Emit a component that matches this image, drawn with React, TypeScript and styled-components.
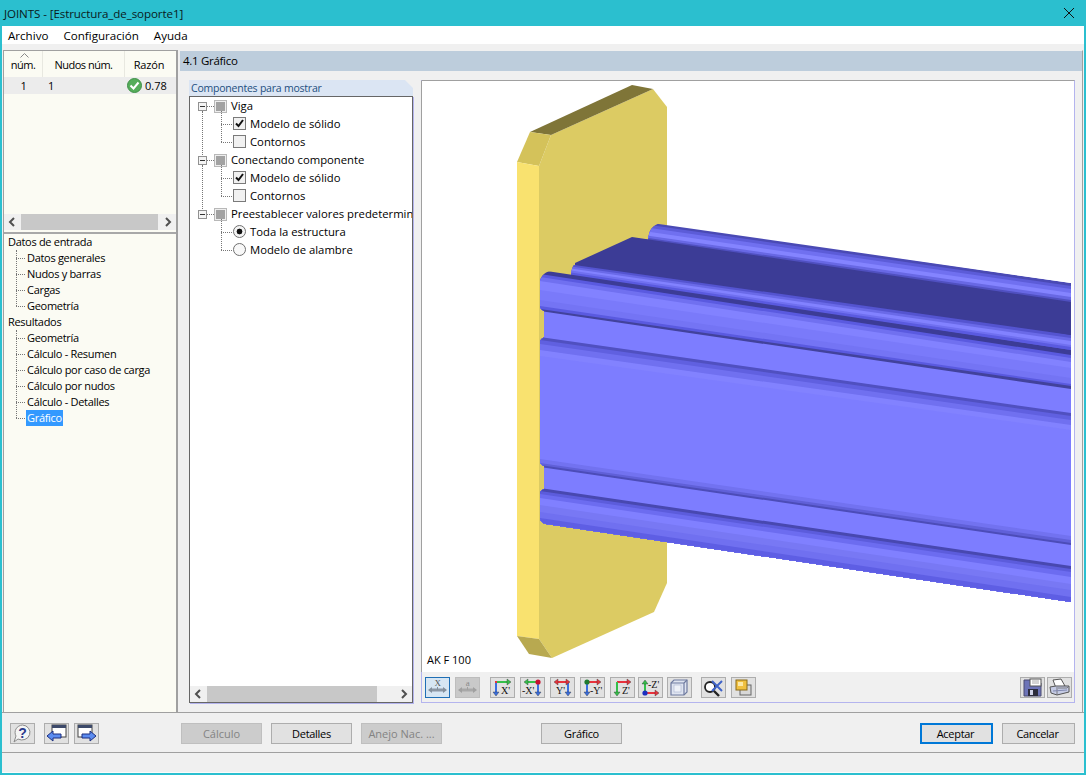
import React from "react";
import styled, { createGlobalStyle, css } from "styled-components";

const GlobalStyle = createGlobalStyle`
  html, body { margin: 0; padding: 0; background: #fff; }
  body { font-family: "Open Sans", "Noto Sans", "Liberation Sans", sans-serif; font-size: 11px; letter-spacing: -0.3px; color: #000; }
  * { box-sizing: border-box; }
`;

// --- beam drawing data: y at x=540 (l) and x=1071 (r) for each colour step ---
type Stop = { l: number; r: number; c: string };

const BACK_FLANGE: Stop[] = [
  { l: 207, r: 283, c: "#4a4ab4" },
  { l: 209, r: 286, c: "#5c5cd8" },
  { l: 212, r: 289, c: "#7070f0" },
  { l: 216, r: 293, c: "#8484ff" },
  { l: 220, r: 297, c: "#6868e4" },
  { l: 222, r: 300, c: "#5050c0" },
];

const UPPER_LIP: Stop[] = [
  { l: 260, r: 335, c: "#5454d0" },
  { l: 262, r: 338, c: "#6a6ae8" },
  { l: 264, r: 341, c: "#8282ff" },
  { l: 266, r: 345, c: "#7070f0" },
  { l: 268, r: 347, c: "#5a5ae0" },
];

const FRONT: Stop[] = [
  { l: 270, r: 350, c: "#3c3c96" },
  { l: 274, r: 355, c: "#5a5ae0" },
  { l: 277, r: 358, c: "#7070f0" },
  { l: 281, r: 362, c: "#8282ff" },
  { l: 290, r: 368, c: "#7a7afa" },
  { l: 300, r: 378, c: "#7474f4" },
  { l: 306, r: 384, c: "#5a5ae0" },
  { l: 309, r: 386, c: "#42429c" },
  { l: 311, r: 389, c: "#7d7dff" },
  { l: 337, r: 413, c: "#5050c0" },
  { l: 340, r: 416, c: "#6060e0" },
  { l: 344, r: 420, c: "#7070f0" },
  { l: 350, r: 425, c: "#8282ff" },
  { l: 356, r: 430, c: "#7d7dff" },
  { l: 459, r: 536, c: "#7272f0" },
  { l: 463, r: 540, c: "#6060d8" },
  { l: 465, r: 543, c: "#4c4cb8" },
  { l: 467, r: 545, c: "#7d7dff" },
  { l: 488, r: 566, c: "#4848b0" },
  { l: 491, r: 569, c: "#5c5cdc" },
  { l: 494, r: 572, c: "#6c6cf0" },
  { l: 498, r: 577, c: "#8080ff" },
  { l: 505, r: 584, c: "#7878f4" },
  { l: 512, r: 590, c: "#7070f0" },
  { l: 518, r: 597, c: "#5e5ee4" },
];

const Bands = ({ stops, clip }: { stops: Stop[]; clip: string }) => (
  <g clipPath={`url(#${clip})`}>
    {stops.map((s) => (
      <polygon key={s.l} points={`540,${s.l} 1071,${s.r} 1071,640 540,640`} fill={s.c} />
    ))}
  </g>
);

const JointDrawing = () => (
  <Drawing viewBox="422 81 649 591" width={649} height={591}>
    <defs>
      <clipPath id="backClip">
        <path d="M648 240 Q649 230 653 227 Q657 223 663 223 L1071 283 L1071 303 L632 238 Z" />
      </clipPath>
      <clipPath id="lipClip">
        <path d="M571 276 Q571 267 576 262 L650 262 L1071 335 L1071 352 Z" />
      </clipPath>
      <clipPath id="frontClip">
        <path d="M539 288 Q539 278 544 274 Q549 270 557 271 L1071 350 L1071 602 L546 524 Q539 522 539 514 L539 498 Q539 491 544 489 L544 466 Q539 464 539 458 L539 345 Q539 340 544 337 L544 311 Q539 309 539 302 Z" />
      </clipPath>
    </defs>
    <polygon points="551,135 653,89 667,107 667,583 654,612 552,658 539,639 539,166" fill="#dccb63" />
    <polygon points="530,132 632,85 653,89 551,135" fill="#7f7538" />
    <polygon points="530,132 551,135 539,166 517,162" fill="#d4c25a" />
    <polygon points="517,162 539,166 539,639 517,636" fill="#f9e26f" />
    <polygon points="517,636 539,639 552,658 529,654" fill="#b8a950" />
    <Bands stops={BACK_FLANGE} clip="backClip" />
    <polygon points="575,263 632,237 1071,302 1071,338 575,270" fill="#3c3c96" />
    <Bands stops={UPPER_LIP} clip="lipClip" />
    <Bands stops={FRONT} clip="frontClip" />
  </Drawing>
);

// --- icons ---
const arrowHead = (x: number, y: number, dir: "l" | "r" | "u" | "d", c: string) => {
  const p = {
    l: `${x},${y} ${x + 4},${y - 3} ${x + 4},${y + 3}`,
    r: `${x},${y} ${x - 4},${y - 3} ${x - 4},${y + 3}`,
    u: `${x},${y} ${x - 3},${y + 4} ${x + 3},${y + 4}`,
    d: `${x},${y} ${x - 3},${y - 4} ${x + 3},${y - 4}`,
  }[dir];
  return <polygon points={p} fill={c} stroke="#333" strokeWidth={0.4} />;
};

const AxisLabel = ({ x, y, children }: { x: number; y: number; children: string }) => (
  <text x={x} y={y} fontFamily="Liberation Serif, serif" fontSize={10} letterSpacing={0} fill="#111">
    {children}
  </text>
);

const RED = "#e8323c";
const GREEN = "#35c04a";
const BLUE = "#3a6fe0";

const IconXPos = () => (
  <svg width={23} height={19} viewBox="0 0 23 19">
    <path d="M5 4H17" stroke={GREEN} strokeWidth={2} />
    <path d="M5 3V5" stroke={RED} strokeWidth={2} />
    <path d="M5 5V14" stroke={BLUE} strokeWidth={2} />
    {arrowHead(20, 4, "r", GREEN)}
    {arrowHead(5, 18, "d", BLUE)}
    <AxisLabel x={10} y={16}>X'</AxisLabel>
  </svg>
);

const IconXNeg = () => (
  <svg width={23} height={19} viewBox="0 0 23 19">
    <path d="M7 4H17" stroke={GREEN} strokeWidth={2} />
    <path d="M17 5V14" stroke={BLUE} strokeWidth={2} />
    {arrowHead(3, 4, "l", GREEN)}
    {arrowHead(17, 18, "d", BLUE)}
    <circle cx={17} cy={4} r={2.6} fill="#c8102e" />
    <AxisLabel x={1} y={16}>-X'</AxisLabel>
  </svg>
);

const IconYPos = () => (
  <svg width={23} height={19} viewBox="0 0 23 19">
    <path d="M7 4H15" stroke={RED} strokeWidth={2} />
    <path d="M17 5V14" stroke={BLUE} strokeWidth={2} />
    {arrowHead(3, 4, "l", RED)}
    {arrowHead(19, 4, "r", RED)}
    {arrowHead(17, 18, "d", BLUE)}
    <AxisLabel x={5} y={16}>Y'</AxisLabel>
  </svg>
);

const IconYNeg = () => (
  <svg width={23} height={19} viewBox="0 0 23 19">
    <path d="M6 4H16" stroke={RED} strokeWidth={2} />
    <path d="M6 5V14" stroke={BLUE} strokeWidth={2} />
    {arrowHead(20, 4, "r", RED)}
    {arrowHead(6, 18, "d", BLUE)}
    <circle cx={6} cy={4} r={2.6} fill="#1f7a2e" />
    <AxisLabel x={9} y={16}>-Y'</AxisLabel>
  </svg>
);

const IconZPos = () => (
  <svg width={23} height={19} viewBox="0 0 23 19">
    <path d="M6 4H16" stroke={RED} strokeWidth={2} />
    <path d="M6 4V14" stroke={GREEN} strokeWidth={2} />
    {arrowHead(20, 4, "r", RED)}
    {arrowHead(6, 18, "d", GREEN)}
    <AxisLabel x={11} y={16}>Z'</AxisLabel>
  </svg>
);

const IconZNeg = () => (
  <svg width={23} height={19} viewBox="0 0 23 19">
    <path d="M6 6V14" stroke={GREEN} strokeWidth={2} />
    <path d="M6 15H16" stroke={RED} strokeWidth={2} />
    {arrowHead(6, 2, "u", GREEN)}
    {arrowHead(20, 15, "r", RED)}
    <circle cx={6} cy={15} r={2.6} fill="#1c2fc0" />
    <AxisLabel x={9} y={10}>-Z'</AxisLabel>
  </svg>
);

const IconCube = () => (
  <svg width={23} height={19} viewBox="0 0 23 19">
    <path d="M6 2H19V14L16 17H3V5Z" fill="#dfe4f0" stroke="#6f7ba0" strokeWidth={1.2} />
    <path d="M3 5H16V17M16 5L19 2" fill="none" stroke="#6f7ba0" strokeWidth={1.2} />
    <rect x={6} y={7} width={7} height={7} fill="#eef1f8" stroke="#a9b3cf" strokeWidth={0.6} />
  </svg>
);

const IconZoomOff = () => (
  <svg width={23} height={19} viewBox="0 0 23 19">
    <circle cx={8} cy={9} r={5} fill="#fff" stroke="#222" strokeWidth={1.8} />
    <path d="M12 13L17 18" stroke="#222" strokeWidth={2.4} />
    <path d="M10 3L20 13M20 3L10 13" stroke="#3f63c8" strokeWidth={2} />
  </svg>
);

const IconLayers = () => (
  <svg width={23} height={19} viewBox="0 0 23 19">
    <rect x={8} y={7} width={11} height={10} fill="#d8d8d8" stroke="#666" />
    <rect x={4} y={2} width={11} height={10} fill="#f0c040" stroke="#8a6a18" />
    <rect x={6} y={4} width={5} height={4} fill="#fbe8a8" />
  </svg>
);

const IconDimension = ({ label, faded }: { label: string; faded?: boolean }) => (
  <svg width={23} height={19} viewBox="0 0 23 19">
    <text x={11.5} y={8} textAnchor="middle" fontFamily="Liberation Serif, serif" fontSize={9} fill={faded ? "#8a8a8a" : "#555"}>
      {label}
    </text>
    <path d="M5 12H18" stroke={faded ? "#a8a8a8" : "#8c97a4"} strokeWidth={3} />
    <path d="M2 12L6 9V15ZM21 12L17 9V15Z" fill={faded ? "#a0a0a0" : "#84909c"} />
    <path d="M11.5 9V12" stroke={faded ? "#a0a0a0" : "#84909c"} />
  </svg>
);

const IconSave = () => (
  <svg width={23} height={19} viewBox="0 0 23 19">
    <path d="M3 2H17L20 5V18H3Z" fill="#6d74b8" stroke="#4a4a70" />
    <rect x={9} y={1} width={11} height={7} fill="#fff" stroke="#555" />
    <path d="M11 3H18M11 5H18" stroke="#aaa" />
    <rect x={7} y={11} width={10} height={7} fill="#2c2c3c" />
    <rect x={9} y={12} width={3} height={5} fill="#cfd2e8" />
  </svg>
);

const IconPrint = () => (
  <svg width={23} height={19} viewBox="0 0 23 19">
    <path d="M5 2L13 1L17 8L8 10Z" fill="#fff" stroke="#555" />
    <path d="M2 9L8 8L21 8V14L9 17L3 15Z" fill="#c5cbe4" stroke="#555" />
    <path d="M8 10L19 10L21 8M9 17V11" fill="none" stroke="#666" strokeWidth={0.8} />
    <path d="M5 13L19 12" stroke="#8088b0" />
  </svg>
);

const IconHelp = () => (
  <svg width={23} height={19} viewBox="0 0 23 19">
    <path d="M11.5 1A8 7.5 0 1 1 7 15L3 18L5 12A8 7.5 0 0 1 11.5 1Z" fill="#f4f4f4" stroke="#8b8b8b" />
    <text x={11.5} y={14} textAnchor="middle" fontFamily="Liberation Sans, sans-serif" fontWeight={700} fontSize={14} fill="#2a3a8c">
      ?
    </text>
  </svg>
);

const IconNav = ({ dir }: { dir: "l" | "r" }) => (
  <svg width={23} height={19} viewBox="0 0 23 19">
    <rect x={dir === "l" ? 7 : 3} y={1} width={14} height={12} fill="#fff" stroke="#444" />
    <rect x={dir === "l" ? 7 : 3} y={1} width={14} height={3} fill="#3d4a6a" />
    {dir === "l" ? (
      <path d="M2 12L8 7V10H16V14H8V17Z" fill="#5c8cf0" stroke="#1c2f80" />
    ) : (
      <path d="M21 12L15 7V10H7V14H15V17Z" fill="#5c8cf0" stroke="#1c2f80" />
    )}
  </svg>
);

const ScrollBar = ({ thumbLeft, thumbWidth }: { thumbLeft: number; thumbWidth: number }) => (
  <ScrollTrack>
    <ScrollArrow viewBox="0 0 8 10" width={8} height={10} $side="left">
      <path d="M6 1L2 5L6 9" fill="none" stroke="#505050" strokeWidth={2} />
    </ScrollArrow>
    <ScrollThumb style={{ marginLeft: thumbLeft, width: thumbWidth }} />
    <ScrollArrow viewBox="0 0 8 10" width={8} height={10} $side="right">
      <path d="M2 1L6 5L2 9" fill="none" stroke="#505050" strokeWidth={2} />
    </ScrollArrow>
  </ScrollTrack>
);

const NAV_TREE = [
  { title: "Datos de entrada", items: ["Datos generales", "Nudos y barras", "Cargas", "Geometría"] },
  {
    title: "Resultados",
    items: ["Geometría", "Cálculo - Resumen", "Cálculo por caso de carga", "Cálculo por nudos", "Cálculo - Detalles", "Gráfico"],
  },
];

const OPTION_TREE = [
  {
    title: "Viga",
    kind: "check",
    items: [
      { label: "Modelo de sólido", on: true },
      { label: "Contornos", on: false },
    ],
  },
  {
    title: "Conectando componente",
    kind: "check",
    items: [
      { label: "Modelo de sólido", on: true },
      { label: "Contornos", on: false },
    ],
  },
  {
    title: "Preestablecer valores predeterminados",
    kind: "radio",
    items: [
      { label: "Toda la estructura", on: true },
      { label: "Modelo de alambre", on: false },
    ],
  },
];

const VIEW_TOOLS = [
  { key: "x", el: <IconXPos /> },
  { key: "-x", el: <IconXNeg /> },
  { key: "y", el: <IconYPos /> },
  { key: "-y", el: <IconYNeg /> },
  { key: "z", el: <IconZPos /> },
];

export default function App() {
  return (
    <>
      <GlobalStyle />
      <Window>
        <TitleBar>
          <TitleText>JOINTS - [Estructura_de_soporte1]</TitleText>
          <svg width={12} height={12} viewBox="0 0 12 12">
            <path d="M1 1L11 11M11 1L1 11" stroke="#111" strokeWidth={1} />
          </svg>
        </TitleBar>
        <MenuBar>
          <MenuItem>Archivo</MenuItem>
          <MenuItem>Configuración</MenuItem>
          <MenuItem>Ayuda</MenuItem>
        </MenuBar>

        <Body>
          <Sidebar>
            <CaseTable>
              <HeaderRow>
                <NumHeader>
                  <SortCaret viewBox="0 0 9 5" width={9} height={5}>
                    <path d="M0.5 4.5L4.5 0.5L8.5 4.5" fill="none" stroke="#888" />
                  </SortCaret>
                  núm.
                </NumHeader>
                <NodesHeader>Nudos núm.</NodesHeader>
                <RatioHeader>Razón</RatioHeader>
              </HeaderRow>
              <DataRow>
                <NumCell>1</NumCell>
                <NodesCell>1</NodesCell>
                <RatioCell>
                  <svg width={15} height={15} viewBox="0 0 15 15">
                    <circle cx={7.5} cy={7.5} r={7} fill="#55ad5a" stroke="#3f8f48" />
                    <path d="M3.5 7.5L6.5 10.5L11.5 4.5" fill="none" stroke="#fff" strokeWidth={2} />
                  </svg>
                  0.78
                </RatioCell>
              </DataRow>
            </CaseTable>
            <ScrollBar thumbLeft={0} thumbWidth={137} />
            <NavTree>
              {NAV_TREE.map((group) => (
                <div key={group.title}>
                  <NavParent>{group.title}</NavParent>
                  <NavChildren>
                    {group.items.map((item) => (
                      <NavChild key={item}>
                        <NavLabel $selected={item === "Gráfico"}>{item}</NavLabel>
                      </NavChild>
                    ))}
                  </NavChildren>
                </div>
              ))}
            </NavTree>
          </Sidebar>

          <Section>
            <SectionHeader>4.1 Gráfico</SectionHeader>
            <SectionContent>
              <OptionsColumn>
                <OptionsTab>Componentes para mostrar</OptionsTab>
                <OptionsBox>
                  <OptionsTree>
                    {OPTION_TREE.map((group, i) => (
                      <OptionGroup key={group.title} $last={i === OPTION_TREE.length - 1}>
                        <OptionRow>
                          <ExpandBox />
                          <Connector />
                          <TriCheck />
                          <OptionTitle>{group.title}</OptionTitle>
                        </OptionRow>
                        <OptionChildren>
                          {group.items.map((item) => (
                            <OptionChild key={item.label}>
                              {group.kind === "check" ? (
                                <CheckBox>
                                  {item.on && (
                                    <svg width={11} height={11} viewBox="0 0 11 11">
                                      <path d="M2 5.5L4.5 8L9 2" fill="none" stroke="#111" strokeWidth={2} />
                                    </svg>
                                  )}
                                </CheckBox>
                              ) : (
                                <RadioBox $on={item.on} />
                              )}
                              {item.label}
                            </OptionChild>
                          ))}
                        </OptionChildren>
                      </OptionGroup>
                    ))}
                  </OptionsTree>
                  <ScrollBar thumbLeft={0} thumbWidth={170} />
                </OptionsBox>
              </OptionsColumn>

              <GraphicColumn>
                <Viewport>
                  <JointDrawing />
                  <ViewportLabel>AK F 100</ViewportLabel>
                </Viewport>
                <Toolbar>
                  <ToolGroup>
                    <ToolButton $active>
                      <IconDimension label="X" />
                    </ToolButton>
                    <ToolButton $disabled>
                      <IconDimension label="a" faded />
                    </ToolButton>
                  </ToolGroup>
                  <AxisGroup>
                    {VIEW_TOOLS.map((tool) => (
                      <ToolButton key={tool.key}>{tool.el}</ToolButton>
                    ))}
                    <ToolButton $pull={2}>
                      <IconZNeg />
                    </ToolButton>
                    <ToolButton $pull={1}>
                      <IconCube />
                    </ToolButton>
                  </AxisGroup>
                  <ToolGroup>
                    <ToolButton>
                      <IconZoomOff />
                    </ToolButton>
                    <ToolButton>
                      <IconLayers />
                    </ToolButton>
                  </ToolGroup>
                  <ExportGroup>
                    <ToolButton>
                      <IconSave />
                    </ToolButton>
                    <ToolButton>
                      <IconPrint />
                    </ToolButton>
                  </ExportGroup>
                </Toolbar>
              </GraphicColumn>
            </SectionContent>
          </Section>
        </Body>

        <ActionBar>
          <HelpGroup>
            <ToolButton>
              <IconHelp />
            </ToolButton>
            <NavButtons>
              <ToolButton>
                <IconNav dir="l" />
              </ToolButton>
              <ToolButton>
                <IconNav dir="r" />
              </ToolButton>
            </NavButtons>
          </HelpGroup>
          <MainButtons>
            <ActionButton $disabled>Cálculo</ActionButton>
            <ActionButton>Detalles</ActionButton>
            <ActionButton $disabled>Anejo Nac. ...</ActionButton>
          </MainButtons>
          <GraphicButton>Gráfico</GraphicButton>
          <DialogButtons>
            <DialogButton $primary>Aceptar</DialogButton>
            <DialogButton>Cancelar</DialogButton>
          </DialogButtons>
        </ActionBar>
        <StatusBar />
      </Window>
    </>
  );
}

const Window = styled.div`
  width: 1086px;
  height: 775px;
  display: flex;
  flex-direction: column;
  overflow: hidden;
  background: #f0f0f0;
  border: 2px solid #2bbfcf;
  border-top: none;
`;

const TitleBar = styled.div`
  height: 26px;
  margin: 0 -2px;
  padding: 0 11px 0 4px;
  flex: none;
  display: flex;
  align-items: center;
  justify-content: space-between;
  background: #2bbfcf;
`;

const TitleText = styled.span`
  font-size: 11.6px;
  letter-spacing: -0.1px;
  color: #0a1a1c;
`;

const MenuBar = styled.div`
  height: 18px;
  flex: none;
  display: flex;
  align-items: center;
  gap: 15px;
  padding-left: 6px;
  background: #fff;
`;

const MenuItem = styled.span`
  font-size: 11.6px;
  letter-spacing: 0;
`;

const Body = styled.div`
  height: 669px;
  flex: none;
  display: flex;
  gap: 2px;
  padding: 6px 0 0 1px;
  border-bottom: 1px solid #a0a0a0;
`;

const Sidebar = styled.div`
  width: 175px;
  flex: none;
  display: flex;
  flex-direction: column;
  background: #fbfbf3;
  border: 1px solid #a0a0a0;
  border-bottom: none;
  border-right-width: 2px;
`;

const CaseTable = styled.div`
  height: 163px;
  flex: none;
`;

const HeaderRow = styled.div`
  height: 26px;
  display: grid;
  grid-template-columns: 39px 82px 1fr;
`;

const headerCell = css`
  position: relative;
  display: flex;
  align-items: flex-end;
  justify-content: center;
  padding-bottom: 5px;
  letter-spacing: -0.5px;
  border-right: 1px solid #e8e8e0;
`;

const NumHeader = styled.div`
  ${headerCell}
`;

const NodesHeader = styled.div`
  ${headerCell}
`;

const RatioHeader = styled.div`
  ${headerCell}
  letter-spacing: -0.2px;
  padding-right: 3px;
  border-right: none;
`;

const SortCaret = styled.svg`
  position: absolute;
  top: 2px;
  left: 16px;
`;

const DataRow = styled.div`
  height: 17px;
  padding-bottom: 1px;
  display: grid;
  grid-template-columns: 39px 82px 1fr;
  align-items: center;
  background: #ececec;
`;

const NumCell = styled.div`
  text-align: center;
`;

const NodesCell = styled.div`
  padding-left: 5px;
`;

const RatioCell = styled.div`
  display: flex;
  align-items: center;
  gap: 3px;
  padding-left: 2px;
  letter-spacing: 0;
`;

const ScrollTrack = styled.div`
  position: relative;
  height: 16px;
  flex: none;
  padding-left: 17px;
  padding-right: 17px;
  background: #f0f0f0;
`;

const ScrollThumb = styled.div`
  height: 100%;
  background: #c8c8c8;
`;

const ScrollArrow = styled.svg<{ $side: "left" | "right" }>`
  position: absolute;
  top: 3px;
  ${({ $side }) => ($side === "left" ? "left: 4px;" : "right: 4px;")}
`;

const NavTree = styled.div`
  flex: 1;
  margin-top: 2px;
  border-top: 2px solid #a8a8a8;
`;

const NavParent = styled.div`
  height: 16px;
  line-height: 15px;
  padding-left: 4px;
  white-space: nowrap;
`;

const NavChildren = styled.div`
  position: relative;
  padding-left: 22px;

  &::before {
    content: "";
    position: absolute;
    left: 12px;
    top: 0;
    bottom: 8px;
    border-left: 1px dotted #777;
  }
`;

const NavChild = styled.div`
  position: relative;
  height: 16px;
  line-height: 15px;
  white-space: nowrap;

  &::before {
    content: "";
    position: absolute;
    left: -10px;
    width: 9px;
    top: 8px;
    border-top: 1px dotted #777;
  }
`;

const NavLabel = styled.span<{ $selected?: boolean }>`
  display: inline-block;
  padding: 0 1px;
  ${({ $selected }) => $selected && "background: #3399ff; color: #fff; height: 16px;"}
`;

const Section = styled.div`
  flex: 1;
  min-width: 0;
  margin-right: 1px;
  display: flex;
  flex-direction: column;
  border-right: 1px solid #a0a0a0;
  border-top: 1px solid #f0f0f0;
`;

const SectionHeader = styled.div`
  height: 20px;
  line-height: 20px;
  padding-left: 3px;
  flex: none;
  font-size: 11.5px;
  background: #bdcddc;
`;

const SectionContent = styled.div`
  flex: 1;
  min-height: 0;
  display: flex;
  gap: 8px;
  padding: 9px 7px 9px 9px;
`;

const OptionsColumn = styled.div`
  width: 224px;
  flex: none;
  display: flex;
  flex-direction: column;
`;

const OptionsTab = styled.div`
  height: 16px;
  line-height: 16px;
  padding-left: 2px;
  flex: none;
  font-size: 10.5px;
  letter-spacing: -0.22px;
  color: #1d4f80;
  background: #dbe5f3;
  clip-path: polygon(0 0, calc(100% - 8px) 0, 100% 8px, 100% 100%, 0 100%);
`;

const OptionsBox = styled.div`
  flex: 1;
  min-height: 0;
  display: flex;
  flex-direction: column;
  background: #fff;
  border: 1px solid #666;
  box-shadow: 1px 1px 0 #b4b4ee;
`;

const OptionsTree = styled.div`
  flex: 1;
  min-height: 0;
  overflow: hidden;
  font-size: 11.3px;
  letter-spacing: 0;
`;

const OptionGroup = styled.div<{ $last: boolean }>`
  position: relative;

  ${({ $last }) =>
    !$last &&
    css`
      &::before {
        content: "";
        position: absolute;
        left: 12px;
        top: 14px;
        bottom: -4px;
        border-left: 1px dotted #777;
      }
    `}
`;

const OptionRow = styled.div`
  height: 18px;
  display: flex;
  align-items: center;
  padding-left: 8px;
  white-space: nowrap;
`;

const ExpandBox = styled.span`
  position: relative;
  width: 9px;
  height: 9px;
  flex: none;
  background: #f4f4f4;
  border: 1px solid #919191;

  &::after {
    content: "";
    position: absolute;
    left: 1px;
    right: 1px;
    top: 3px;
    border-top: 1px solid #333;
  }
`;

const Connector = styled.span`
  width: 7px;
  flex: none;
  border-top: 1px dotted #777;
`;

const TriCheck = styled.span`
  width: 13px;
  height: 13px;
  flex: none;
  margin-right: 4px;
  background: #a2a2a2;
  border: 1px solid #b8b8b8;
  box-shadow: inset 0 0 0 1px #eee;
`;

const OptionTitle = styled.span`
  line-height: 18px;
`;

const OptionChildren = styled.div`
  position: relative;
  padding-left: 43px;

  &::before {
    content: "";
    position: absolute;
    left: 31px;
    top: -4px;
    bottom: 9px;
    border-left: 1px dotted #777;
  }
`;

const OptionChild = styled.div`
  position: relative;
  height: 18px;
  display: flex;
  align-items: center;
  gap: 4px;
  line-height: 16px;
  padding-bottom: 1px;
  white-space: nowrap;

  &::before {
    content: "";
    position: absolute;
    left: -12px;
    width: 11px;
    top: 9px;
    border-top: 1px dotted #777;
  }
`;

const CheckBox = styled.span`
  width: 13px;
  height: 13px;
  flex: none;
  display: flex;
  align-items: center;
  justify-content: center;
  background: #f1f1f1;
  border: 1px solid #7a7a7a;
`;

const RadioBox = styled.span<{ $on: boolean }>`
  width: 13px;
  height: 13px;
  flex: none;
  border-radius: 50%;
  border: 1px solid #6f6f6f;
  background: ${({ $on }) => ($on ? "radial-gradient(circle, #111 0 2.6px, #f4f4f4 3.2px)" : "#f8f8f8")};
`;

const GraphicColumn = styled.div`
  flex: 1;
  min-width: 0;
  display: flex;
  flex-direction: column;
  border-top: 1px solid #a0a0a0;
  border-left: 1px solid #b4b4ee;
  border-right: 1px solid #b4b4ee;
  border-bottom: 1px solid #b4b4ee;
`;

const Viewport = styled.div`
  position: relative;
  flex: 1;
  min-height: 0;
  margin-left: -1px;
  background: #fff;
  border-left: 1px solid #a0a0a0;
`;

const Drawing = styled.svg`
  display: block;
`;

const ViewportLabel = styled.span`
  position: absolute;
  left: 5px;
  bottom: 5px;
  letter-spacing: 0;
`;

const Toolbar = styled.div`
  height: 30px;
  flex: none;
  display: flex;
  align-items: center;
  padding: 0 2px 0 3px;
  background: #f0f0f0;
`;

const ToolGroup = styled.div`
  display: flex;
  gap: 5px;
  margin-right: 10px;
`;

const AxisGroup = styled.div`
  display: flex;
  gap: 5px;
  margin-right: 9px;
`;

const ExportGroup = styled.div`
  display: flex;
  gap: 2px;
  margin-left: auto;
`;

const ToolButton = styled.div<{ $active?: boolean; $disabled?: boolean; $pull?: number }>`
  width: 25px;
  height: 21px;
  flex: none;
  display: flex;
  align-items: center;
  justify-content: center;
  margin-left: ${({ $pull }) => ($pull ? -$pull : 0)}px;
  background: ${({ $active, $disabled }) => ($active ? "#d7e6f3" : $disabled ? "#c9c9c9" : "#e1e1e1")};
  border: 1px solid ${({ $active, $disabled }) => ($active ? "#1f6fb5" : $disabled ? "#bdbdbd" : "#adadad")};
`;

const ActionBar = styled.div`
  height: 40px;
  flex: none;
  display: flex;
  align-items: center;
  padding: 2px 0 0 8px;
  border-bottom: 1px solid #a0a0a0;
`;

const HelpGroup = styled.div`
  display: flex;
  gap: 9px;
  width: 171px;
  flex: none;
`;

const NavButtons = styled.div`
  display: flex;
  gap: 5px;
`;

const MainButtons = styled.div`
  display: flex;
  gap: 9px;
  margin-right: 99px;
`;

const ActionButton = styled.div<{ $disabled?: boolean }>`
  width: 81px;
  height: 21px;
  display: flex;
  align-items: center;
  justify-content: center;
  white-space: nowrap;
  letter-spacing: ${({ $disabled }) => ($disabled ? "0" : "-0.3px")};
  color: ${({ $disabled }) => ($disabled ? "#838383" : "#000")};
  background: ${({ $disabled }) => ($disabled ? "#cccccc" : "#e1e1e1")};
  border: 1px solid ${({ $disabled }) => ($disabled ? "#bfbfbf" : "#adadad")};
`;

const GraphicButton = styled(ActionButton)``;

const DialogButtons = styled.div`
  display: flex;
  gap: 9px;
  margin-left: auto;
  margin-right: 9px;
`;

const DialogButton = styled.div<{ $primary?: boolean }>`
  width: 73px;
  height: 21px;
  padding-right: 2px;
  display: flex;
  align-items: center;
  justify-content: center;
  background: #e1e1e1;
  border: ${({ $primary }) => ($primary ? "2px solid #0078d7" : "1px solid #adadad")};
`;

const StatusBar = styled.div`
  flex: 1;
  min-height: 0;
  border-bottom: 1px solid #fbfbfb;
`;
